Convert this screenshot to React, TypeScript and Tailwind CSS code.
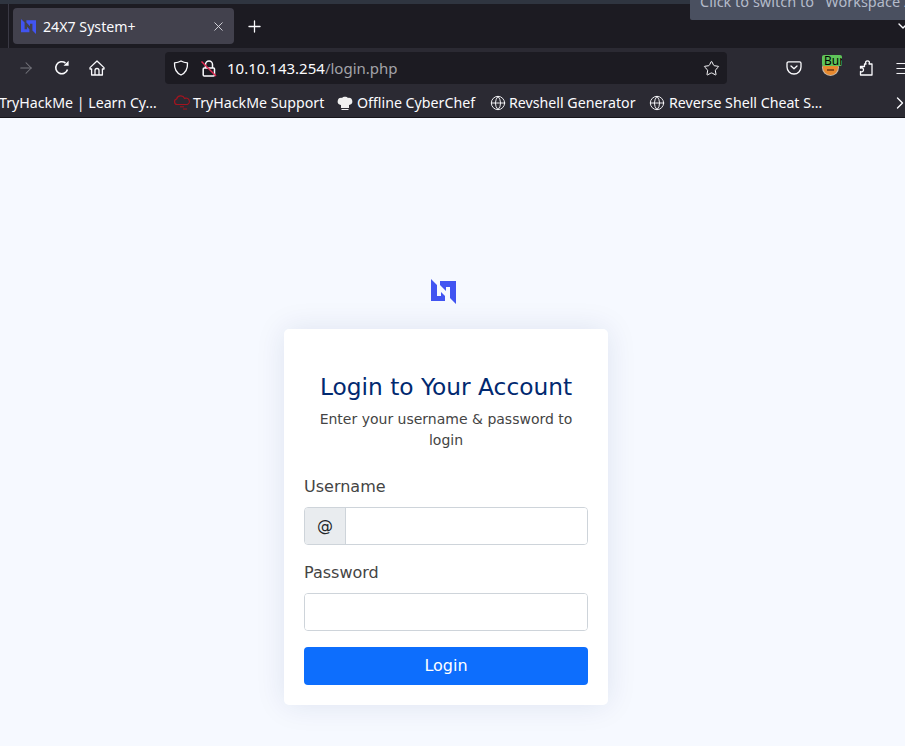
import { ArrowRight, ChevronDown, ChevronRight, Globe, Menu, Plus, Star, X } from "lucide-react";

const uiFont = "font-['Noto_Sans','Open_Sans',sans-serif]";
const pageFont = "font-['DejaVu_Sans',sans-serif]";

function Logo({ size }: { size: number }) {
  return (
    <svg width={size} height={size} viewBox="0 0 25 25" fill="#4154f1">
      <path d="M0 0 L6 6 V17 H10 V13 L14 17 V22 H0 Z" />
      <path d="M9 2 H25 V25 L19 19 V8 H15 V12 L9 6 Z" />
    </svg>
  );
}

function Reload() {
  return (
    <svg width="16" height="16" viewBox="0 0 16 16" fill="none" stroke="#fbfbfe" strokeWidth="1.6">
      <path d="M13.5 9.5 A6 6 0 1 1 11.5 3" />
      <path d="M9.5 5.8 H14.6 V0.8 Z" fill="#fbfbfe" stroke="none" />
    </svg>
  );
}

function HomeIcon() {
  return (
    <svg width="16" height="16" viewBox="0 0 16 16" fill="none" stroke="#fbfbfe" strokeWidth="1.3" strokeLinejoin="round">
      <path d="M8 1 L1 7.6 V9 H2.6 V15 H13.4 V9 H15 V7.6 Z" />
      <path d="M6 15 V10.5 A2 2 0 0 1 10 10.5 V15" />
    </svg>
  );
}

function ShieldIcon() {
  return (
    <svg width="16" height="16" viewBox="0 0 16 16" fill="none" stroke="#fbfbfe" strokeWidth="1.3" strokeLinejoin="round">
      <path d="M8 1 C10 2.2 12.5 2.7 14.5 2.8 C14.8 9 12.5 13 8 15 C3.5 13 1.2 9 1.5 2.8 C3.5 2.7 6 2.2 8 1 Z" />
    </svg>
  );
}

function BrokenLock() {
  return (
    <svg width="16" height="17" viewBox="0 0 16 17" fill="none">
      <path d="M4.5 8 V4.5 A3.5 3.5 0 0 1 11.5 4.5 V8" stroke="#fbfbfe" strokeWidth="1.5" />
      <rect x="2.2" y="8" width="11.3" height="8" rx="1" stroke="#fbfbfe" strokeWidth="1.5" />
      <path d="M0.5 1.5 L15 16" stroke="#e22850" strokeWidth="1.5" />
    </svg>
  );
}

function Pocket() {
  return (
    <svg width="16" height="16" viewBox="0 0 16 16" fill="none" stroke="#fbfbfe" strokeWidth="1.3" strokeLinecap="round" strokeLinejoin="round">
      <path d="M2.5 1.8 H13.5 A1.5 1.5 0 0 1 15 3.3 V7 A7 7 0 0 1 1 7 V3.3 A1.5 1.5 0 0 1 2.5 1.8 Z" />
      <path d="M5 6 L8 8.8 L11 6" />
    </svg>
  );
}

function Puzzle() {
  return (
    <svg width="16" height="16" viewBox="0 0 16 16" fill="none" stroke="#fbfbfe" strokeWidth="1.3" strokeLinejoin="round">
      <path d="M6.5 4 H8 C7 2 8 0.8 9.5 0.8 C11 0.8 12 2 11 4 H14 V15 H2.5 V11.5 C4.5 12.3 5.5 11.3 5.5 9.8 C5.5 8.3 4.5 7.4 2.5 8.2 V6.5 H6.5 Z" />
    </svg>
  );
}

function BurpIcon() {
  return (
    <div className="relative h-5 w-5">
      <div className="absolute left-[1px] top-[5px] flex h-[15px] w-[15px] items-center justify-center rounded-full bg-[#e8892e] ring-1 ring-[#c9b8a5]">
        <div className="mt-[4px] h-[2px] w-[7px] bg-[#8a4a1a]" />
      </div>
      <div className="absolute left-0 top-0 h-[11px] w-5 overflow-hidden rounded-[2px] bg-[#5fc45a] pl-[2px] text-[12px] leading-[11px] text-black">
        Bur
      </div>
    </div>
  );
}

function CloudIcon() {
  return (
    <svg width="18" height="16" viewBox="0 0 18 16" fill="none" stroke="#a3141f" strokeWidth="1.2">
      <path d="M4.5 9.5 A2.8 2.8 0 0 1 3.6 4 A4.3 4.3 0 0 1 11.6 3.4 A3 3 0 0 1 14.4 9.5 Z" />
      <path d="M7 11.8 H11 M10 14 H14" strokeWidth="1" />
    </svg>
  );
}

function ChefHat() {
  return (
    <svg width="16" height="16" viewBox="0 0 16 16" fill="#f0f0f0">
      <path d="M4 13 V10 C1 9.5 0.3 7.5 0.8 5.5 C1.3 3 3.5 2.5 5 3 C6 1.2 10 1.2 11 3 C12.5 2.5 14.7 3 15.2 5.5 C15.7 7.5 15 9.5 12 10 V13 Z" />
      <path d="M4.5 14 H11.5 V15 H4.5 Z" />
    </svg>
  );
}

function Bookmark({ icon, label, className }: { icon?: React.ReactNode; label: string; className: string }) {
  return (
    <div className={`flex shrink-0 items-center ${className}`}>
      {icon}
      <span className="whitespace-nowrap text-[14.2px] text-[#fbfbfe]">{label}</span>
    </div>
  );
}

function BrowserChrome() {
  return (
    <header className={`relative h-[118px] shrink-0 overflow-hidden ${uiFont}`}>
      <div className="h-1 bg-[#2f3540]" />

      {/* tabs */}
      <div className="flex h-[44px] items-center bg-[#1c1b22]">
        <div className="ml-2 h-full w-px bg-[#3a3944]" />
        <div className="ml-1 flex h-9 w-[221px] items-center rounded bg-[#42414d] pl-2 pr-[8px]">
          <Logo size={15} />
          <span className="ml-[7px] flex-1 pt-px text-[14.2px] text-[#fbfbfe]">24X7 System+</span>
          <X size={15} color="#d8d8de" strokeWidth={1.5} />
        </div>
        <Plus size={19} color="#fbfbfe" strokeWidth={1.6} className="ml-[11px]" />
        <ChevronDown size={16} color="#fbfbfe" className="ml-auto -mr-[6px]" />
      </div>

      {/* toolbar */}
      <div className="flex h-9 items-center bg-[#2b2a33] pt-1">
        <ArrowRight size={18} color="#77767e" strokeWidth={1.4} className="ml-[17px] shrink-0" />
        <div className="ml-[19px] shrink-0"><Reload /></div>
        <div className="ml-[19px] shrink-0"><HomeIcon /></div>
        <div className="ml-[60px] flex h-8 w-[562px] shrink-0 items-center rounded bg-[#1c1b22] pl-2 pr-[7px]">
          <ShieldIcon />
          <div className="ml-3"><BrokenLock /></div>
          <span className="ml-[10px] text-[15px] text-[#fbfbfe]">
            10.10.143.254<span className="text-[#a3a3a9]">/login.php</span>
          </span>
          <Star size={17} color="#fbfbfe" strokeWidth={1.4} className="ml-auto" />
        </div>
        <div className="ml-[59px] shrink-0"><Pocket /></div>
        <div className="ml-5 -mt-[6px] shrink-0"><BurpIcon /></div>
        <div className="ml-4 shrink-0"><Puzzle /></div>
        <Menu size={17} color="#fbfbfe" strokeWidth={1.4} className="ml-5 shrink-0" />
      </div>

      {/* bookmarks */}
      <div className="flex h-[34px] items-center border-b border-[#16151b] bg-[#2b2a33] pt-[5px]">
        <Bookmark label="TryHackMe | Learn Cy…" className="-ml-px w-[174px]" />
        <Bookmark icon={<span className="mr-[2px]"><CloudIcon /></span>} label="TryHackMe Support" className="w-[164px]" />
        <Bookmark icon={<span className="mr-1"><ChefHat /></span>} label="Offline CyberChef" className="w-[153px]" />
        <Bookmark icon={<Globe size={16} color="#fbfbfe" strokeWidth={1.4} className="mr-[3px]" />} label="Revshell Generator" className="w-[159px]" />
        <Bookmark icon={<Globe size={16} color="#fbfbfe" strokeWidth={1.4} className="mr-1" />} label="Reverse Shell Cheat S…" className="w-[243px]" />
        <ChevronRight size={20} color="#fbfbfe" strokeWidth={1.6} className="-ml-[2px] shrink-0" />
      </div>

      {/* workspace tooltip from the desktop */}
      <div className="absolute left-[690px] top-0 h-5 w-[215px] overflow-hidden rounded-bl-[2px] bg-[#4a5060] pl-[10px]">
        <p className="-mt-[9px] whitespace-pre text-[14.5px] text-[#b4bbca]">Click to switch to   Workspace 2</p>
      </div>
    </header>
  );
}

function Field({ label, prefix }: { label: string; prefix?: string }) {
  return (
    <div>
      <label className="block h-[24px] text-[16px] leading-6 text-[#444444]">{label}</label>
      <div className="mt-2 flex h-[38px] overflow-hidden rounded-[4px] border border-[#ced4da]">
        {prefix && (
          <span className="flex w-[41px] items-center justify-center border-r border-[#ced4da] bg-[#e9ecef] text-[16px] text-[#212529]">
            {prefix}
          </span>
        )}
        <input type="text" className="min-w-0 flex-1 bg-white outline-none" />
      </div>
    </div>
  );
}

export default function App() {
  return (
    <div className="flex h-[746px] flex-col overflow-hidden bg-[#f6f9ff]">
      <BrowserChrome />
      <main className={`flex w-[892px] flex-col items-center pt-[161px] ${pageFont}`}>
        <div className="mr-[6px]"><Logo size={25} /></div>
        <div className="mt-[25px] w-[324px] rounded-[5px] bg-white px-5 pb-5 pt-[41px] shadow-[0_0_30px_rgba(1,41,112,0.1)]">
          <h1 className="text-center text-[23.3px] leading-[34px] text-[#012970]">Login to Your Account</h1>
          <p className="mt-[5px] text-center text-[14px] leading-[21px] text-[#444444]">
            Enter your username &amp; password to login
          </p>
          <div className="mt-[24px] flex flex-col gap-4">
            <Field label="Username" prefix="@" />
            <Field label="Password" />
          </div>
          <button className="mt-4 h-[38px] w-full rounded-[4px] bg-[#0d6efd] text-[16px] text-white">Login</button>
        </div>
      </main>
    </div>
  );
}
